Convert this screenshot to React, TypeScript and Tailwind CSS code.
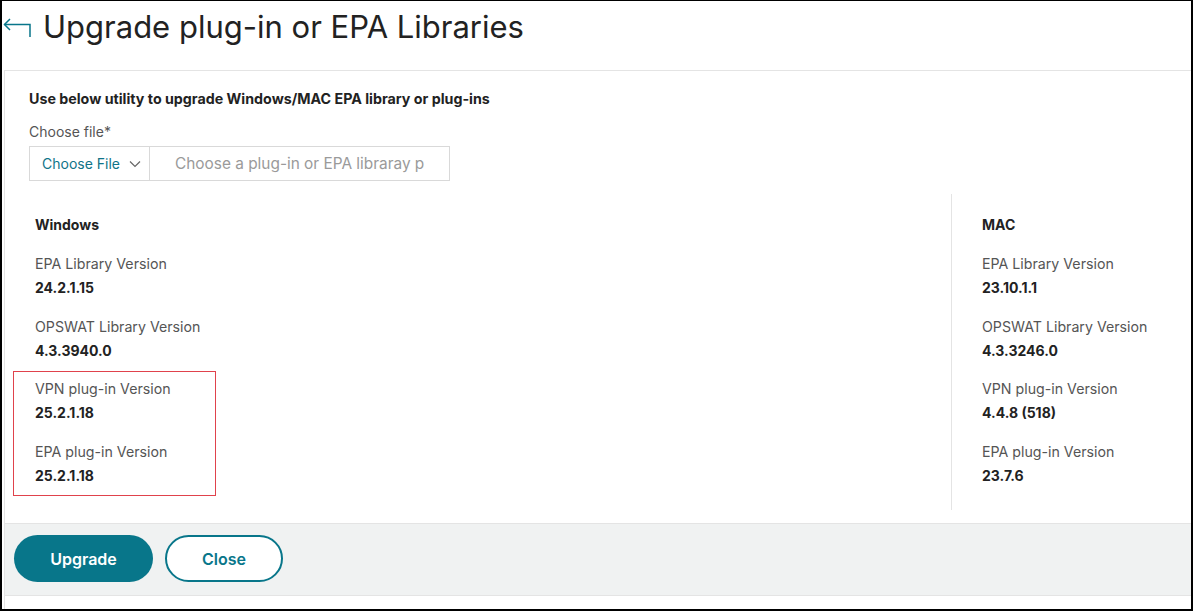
import React from "react";

const TEAL = "#08768a";

type Item = { label: string; value: string };

const WINDOWS: Item[] = [
  { label: "EPA Library Version", value: "24.2.1.15" },
  { label: "OPSWAT Library Version", value: "4.3.3940.0" },
  { label: "VPN plug-in Version", value: "25.2.1.18" },
  { label: "EPA plug-in Version", value: "25.2.1.18" },
];

const MAC: Item[] = [
  { label: "EPA Library Version", value: "23.10.1.1" },
  { label: "OPSWAT Library Version", value: "4.3.3246.0" },
  { label: "VPN plug-in Version", value: "4.4.8 (518)" },
  { label: "EPA plug-in Version", value: "23.7.6" },
];

function VersionItem({ item, last }: { item: Item; last?: boolean }) {
  return (
    <div className={last ? "" : "mb-[18.67px]"}>
      <div className="text-[14.2px] leading-[20px] text-[#555]">{item.label}</div>
      <div className="mt-1 text-[14px] leading-[20px] font-bold text-[#222]">{item.value}</div>
    </div>
  );
}

export default function App() {
  return (
    <div
      className="w-[1193px] h-[611px] bg-white border-black border-t border-l-2 border-r-2 border-b-2 flex flex-col overflow-hidden"
      style={{ fontFamily: "Inter, 'Noto Sans', sans-serif" }}
    >
      {/* header */}
      <div className="h-[69px] flex items-start shrink-0">
        <svg width="32" height="40" viewBox="0 0 32 40" fill="none" stroke={TEAL} strokeWidth="1.5">
          <path d="M28 36 V23.5 H2.5" />
          <path d="M8 18 L2.5 23.5 L8 29" />
        </svg>
        <h1 className="ml-[9px] mt-[7px] text-[31px] leading-[38px] font-normal text-[#222]">
          Upgrade plug-in or EPA Libraries
        </h1>
      </div>

      {/* panel */}
      <div className="ml-[2px] flex-1 min-h-0 flex flex-col border-l border-t border-[#e4e4e4]">
        <div className="flex-1 min-h-0 pl-[24px] pt-[20px]">
          <div className="text-[14.25px] leading-[16px] font-bold text-[#222]">
            Use below utility to upgrade Windows/MAC EPA library or plug-ins
          </div>
          <div className="mt-[16px] text-[14px] leading-[17px] text-[#555]">Choose file*</div>
          <div className="mt-[6px] w-[421px] h-[35px] flex border border-[#d9d9d9]">
            <div className="w-[120px] flex items-center pl-[12px] gap-[8px] border-r border-[#d9d9d9]">
              <span className="text-[14px] text-[#0f7488]">Choose File</span>
              <svg width="14" height="14" viewBox="0 0 14 14" fill="none" stroke="#666" strokeWidth="1.2">
                <path d="M2 4.5 L7 9.5 L12 4.5" />
              </svg>
            </div>
            <div className="flex-1 flex items-center pl-[25px] overflow-hidden whitespace-nowrap">
              <span className="text-[15.4px] text-[#9a9a9a]">Choose a plug-in or EPA libraray p</span>
            </div>
          </div>

          {/* columns */}
          <div className="mt-[13px] flex items-start">
            <div className="w-[922px] pl-[6px] pt-[21px]">
              <div className="text-[14px] leading-[20px] font-bold text-[#222] mb-[19px]">Windows</div>
              <VersionItem item={WINDOWS[0]} />
              <VersionItem item={WINDOWS[1]} />
              <div className="ml-[-22px] mt-[-8px] w-[203px] border border-[#e0424c] pl-[21px] pt-[7px] pb-[9px]">
                <VersionItem item={WINDOWS[2]} />
                <VersionItem item={WINDOWS[3]} last />
              </div>
            </div>
            <div className="border-l border-[#e4e4e4] pl-[30px] pt-[21px] pb-[24px]">
              <div className="text-[14px] leading-[20px] font-bold text-[#222] mb-[19px]">MAC</div>
              {MAC.map((it, i) => (
                <VersionItem key={it.label} item={it} last={i === MAC.length - 1} />
              ))}
            </div>
          </div>
        </div>

        {/* footer */}
        <div className="h-[73px] shrink-0 bg-[#f0f2f2] border-t border-b border-[#e4e4e4] flex items-center pl-[9px] pb-[2px] gap-[12px]">
          <button className="w-[139px] h-[47px] rounded-full bg-[#08768a] text-white text-[16px] font-semibold">
            Upgrade
          </button>
          <button className="w-[118px] h-[47px] rounded-full bg-white border-2 border-[#08768a] text-[#08768a] text-[16px] font-semibold">
            Close
          </button>
        </div>
        <div className="h-[13px] shrink-0" />
      </div>
    </div>
  );
}
